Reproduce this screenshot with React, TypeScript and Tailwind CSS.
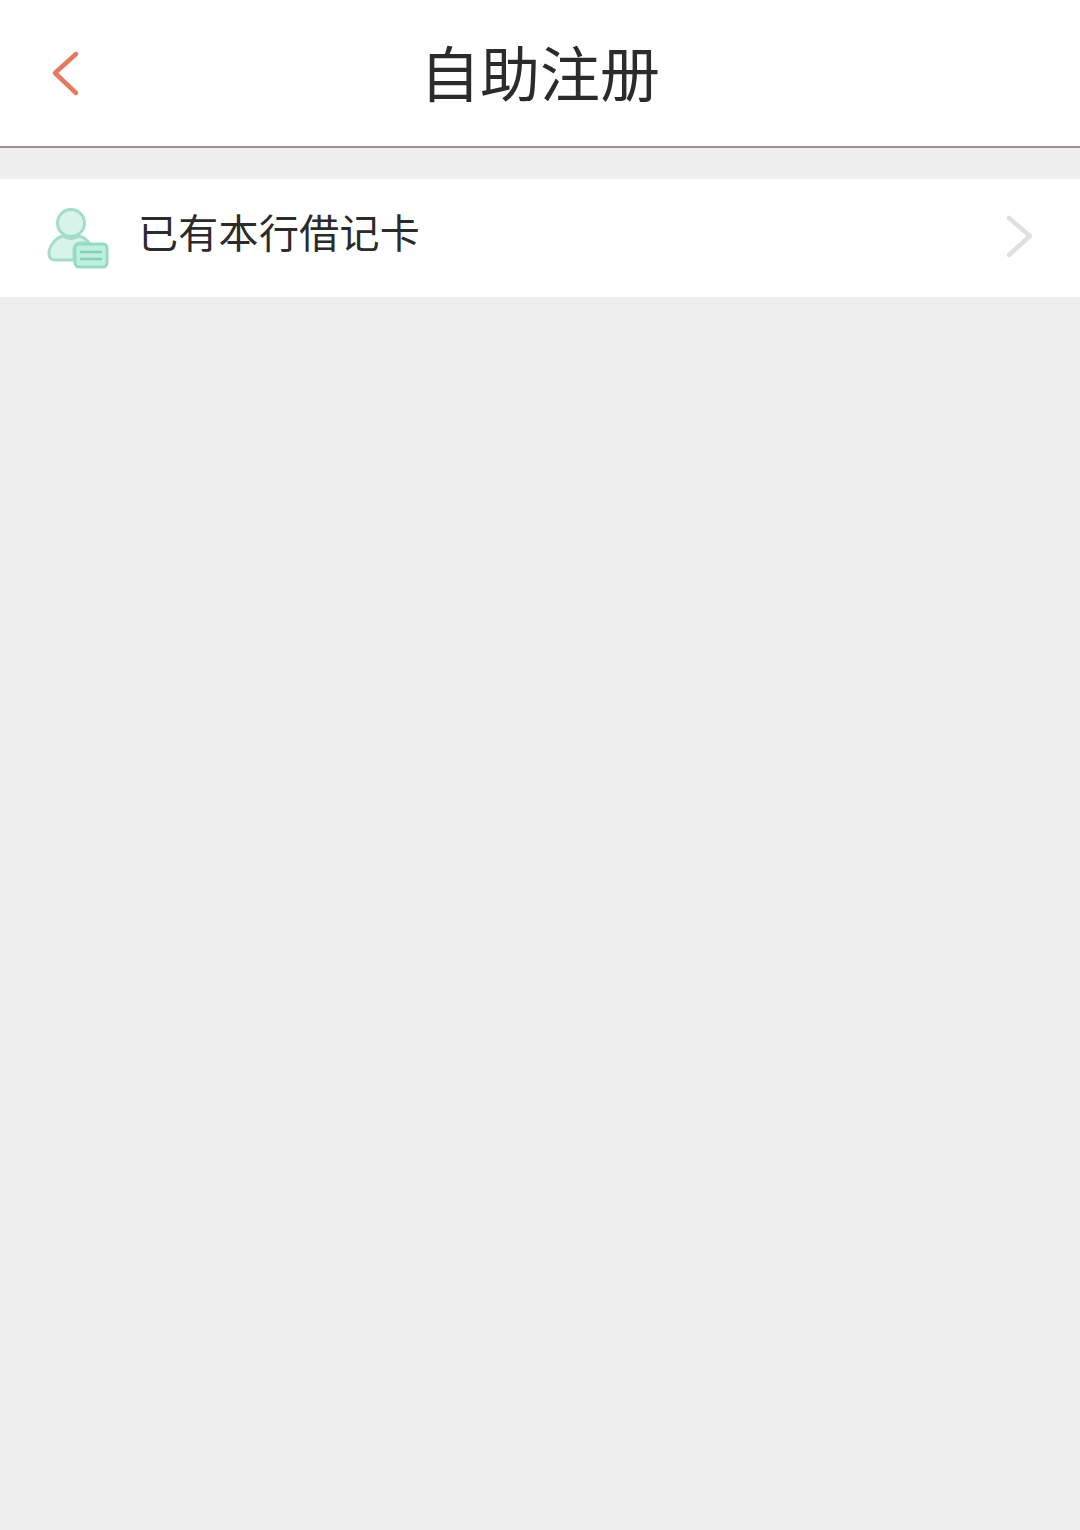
import React from 'react';

const fontStack = { fontFamily: '"Noto Sans CJK SC", "Liberation Sans", sans-serif' };

const CardUserIcon = () => (
  <svg width="64" height="62" viewBox="0 0 64 62" fill="none">
    <circle cx="25" cy="16" r="13.5" fill="#d8f3ea" stroke="#a3dcc9" strokeWidth="3" />
    <path
      d="M3 47c0-9 7-16 14-18 5 3 11 3 16 0 4 1 8 4 10 7H34a6 6 0 0 0-6 6v11H8c-3 0-5-3-5-6Z"
      fill="#d8f3ea"
      stroke="#a3dcc9"
      strokeWidth="3"
      strokeLinejoin="round"
    />
    <rect x="29" y="37" width="32" height="23" rx="4" fill="#bff0df" stroke="#93dcc3" strokeWidth="3" />
    <path d="M34 45h22M34 52h22" stroke="#85cfb6" strokeWidth="2.4" />
  </svg>
);

export default function App() {
  return (
    <div className="min-h-[1530px] bg-[#efeeef] text-[#2b2b2b]" style={fontStack}>
      <header className="relative flex h-[148px] items-center justify-center border-b-[2px] border-[#a08f8f] bg-white">
        <button className="absolute left-[50px] top-[50px]">
          <svg width="30" height="48" viewBox="0 0 30 48" fill="none">
            <path d="M26 4 5 23l21 20" stroke="#e27a60" strokeWidth="4.5" strokeLinecap="round" strokeLinejoin="round" />
          </svg>
        </button>
        <h1 className="mb-[4px] text-[60px] leading-none font-normal">自助注册</h1>
      </header>

      <div className="mt-[31px] flex h-[118px] items-center bg-white pl-[46px] pr-[46px]">
        <CardUserIcon />
        <span className="ml-[28px] mb-[14px] text-[40px] leading-none tracking-[0.3px]">已有本行借记卡</span>
        <svg className="ml-auto mb-[2px]" width="28" height="44" viewBox="0 0 28 44" fill="none">
          <path d="M3 3 24 21 3 40" stroke="#e0e0e0" strokeWidth="4.5" strokeLinecap="round" strokeLinejoin="round" />
        </svg>
      </div>
    </div>
  );
}
